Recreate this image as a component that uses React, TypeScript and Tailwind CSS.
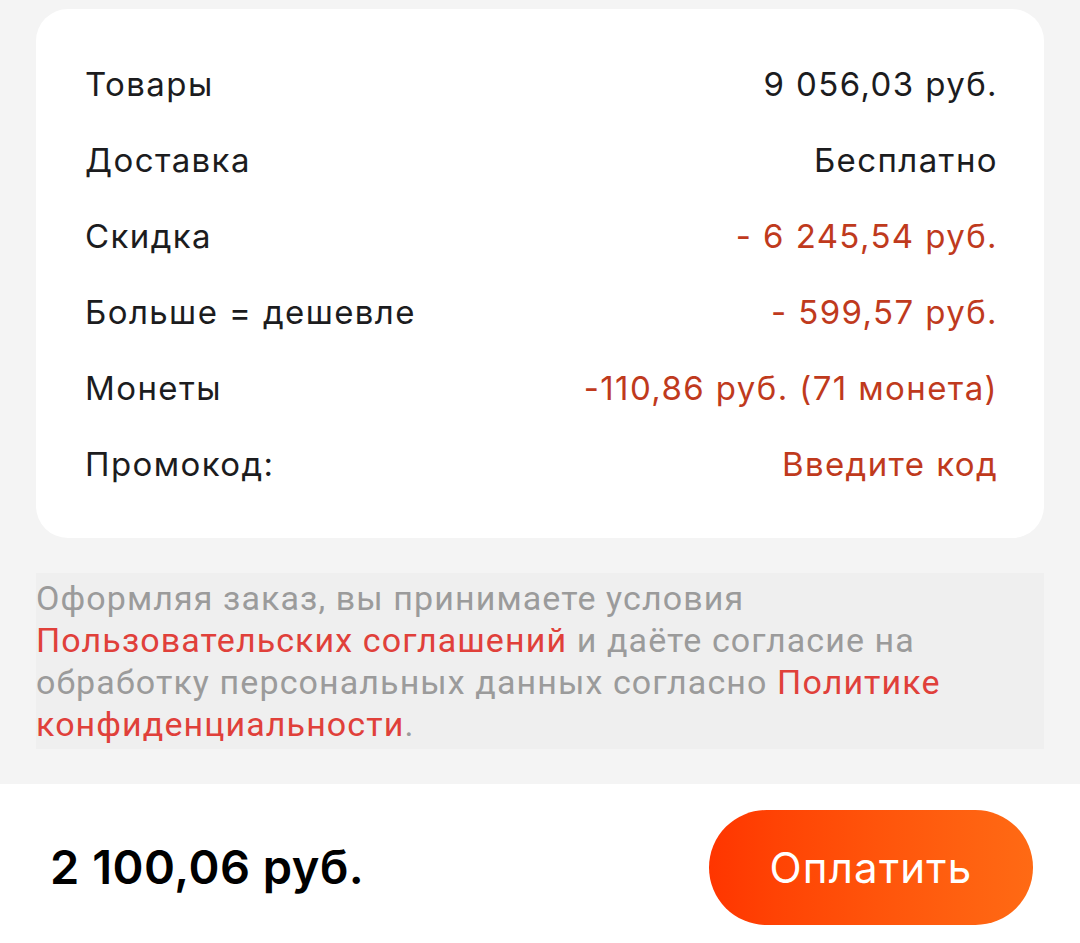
import React from "react";

const rows: { label: string; value: string; red?: boolean }[] = [
  { label: "Товары", value: "9 056,03 руб." },
  { label: "Доставка", value: "Бесплатно" },
  { label: "Скидка", value: "- 6 245,54 руб.", red: true },
  { label: "Больше = дешевле", value: "- 599,57 руб.", red: true },
  { label: "Монеты", value: "-110,86 руб. (71 монета)", red: true },
  { label: "Промокод:", value: "Введите код", red: true },
];

export default function App() {
  return (
    <div className="w-[1080px] h-[943px] bg-[#f4f4f4] flex flex-col overflow-hidden">
      <div className="px-[36px] pt-[9px]">
        <div
          className="bg-white rounded-[32px] pt-[38px] pb-[35px] pl-[49px] pr-[46px] flex flex-col"
          style={{ fontFamily: "Inter, 'Noto Sans', sans-serif" }}
        >
          {rows.map((r) => (
            <div key={r.label} className="h-[76px] flex items-center justify-between text-[33px] tracking-[1.4px]">
              <span className="text-[#1c1c1e]">{r.label}</span>
              <span className={r.red ? "text-[#bf3a1d]" : "text-[#1c1c1e]"}>{r.value}</span>
            </div>
          ))}
        </div>
      </div>
      <div className="px-[36px] mt-[35px]">
        <div
          className="bg-[#efefef] pt-[4px] pb-[4px] text-[34px] leading-[42px] tracking-[1.1px] text-[#9b9b9b]"
          style={{ fontFamily: "Roboto, sans-serif" }}
        >
          Оформляя заказ, вы принимаете условия{" "}
          <span className="text-[#e0403a]">Пользовательских соглашений</span> и даёте согласие на обработку
          персональных данных согласно <span className="text-[#e0403a]">Политике конфиденциальности</span>.
        </div>
      </div>
      <div className="flex-1" />
      <div className="bg-white h-[159px] flex items-center justify-between pl-[50px] pr-[47px] pt-[8px]">
        <span
          className="text-[47px] font-semibold text-black tracking-[0.5px]"
          style={{ fontFamily: "Inter, sans-serif" }}
        >
          2 100,06 руб.
        </span>
        <button
          className="w-[324px] h-[115px] rounded-full bg-gradient-to-r from-[#ff3500] to-[#ff6a14] text-white text-[42px] tracking-[1.2px]"
          style={{ fontFamily: "Inter, sans-serif" }}
        >
          Оплатить
        </button>
      </div>
    </div>
  );
}
